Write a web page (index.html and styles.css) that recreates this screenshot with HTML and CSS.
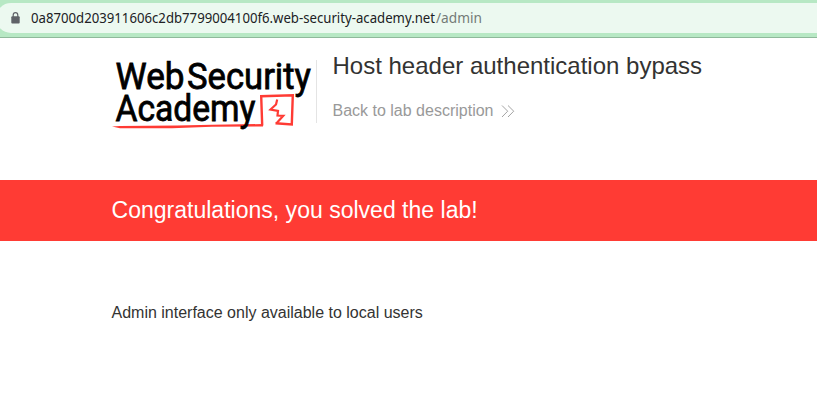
FILE: index.html
```
<!DOCTYPE html>
<html lang="en">
<head>
<meta charset="utf-8">
<title>Host header authentication bypass</title>
<link rel="stylesheet" href="styles.css">
</head>
<body>
<div class="toolbar">
  <div class="address">
    <svg class="lock" width="9" height="12" viewBox="0 0 9 12"><path d="M2.2 5V3a2.3 2.3 0 0 1 4.6 0v2" fill="none" stroke="#5f6368" stroke-width="1.2"/><rect x=".3" y="4.2" width="8.4" height="7.2" rx="1" fill="#5f6368"/></svg>
    <svg class="url" width="460" height="22" viewBox="0 0 460 22"><text x="0" y="15.5" textLength="404" lengthAdjust="spacingAndGlyphs">0a8700d203911606c2db7799004100f6.web-security-academy.net</text><text class="path" x="405" y="15.5" textLength="46" lengthAdjust="spacingAndGlyphs">/admin</text></svg>
  </div>
</div>
<header class="header">
  <svg class="logo" width="204" height="84" viewBox="0 0 204 84" role="img" aria-label="Web Security Academy">
    <g class="wordmark">
      <text x="3.5" y="38.5" textLength="69" lengthAdjust="spacingAndGlyphs">Web</text>
      <text x="75" y="38.5" textLength="124" lengthAdjust="spacingAndGlyphs">Security</text>
    </g>
    <path d="M0 76.5L8 76L65 75.5L100 74.8L151 74L151 76.5L100 76.8L60 78.3L8 78.2Z" fill="#ff3b34"/>
    <path d="M150.2 75.5L149.2 46.2L180.8 45.2L179.8 74.4L163.5 73.3" fill="none" stroke="#ff3b34" stroke-width="2.4"/>
    <path d="M165.2 49.5L164 54.5L158.5 59.5L166 61L165.5 65.5L171.3 65.8L164.5 73.3" fill="none" stroke="#ff3b34" stroke-width="2.2"/>
    <text class="wordmark" x="3.5" y="71" textLength="140" lengthAdjust="spacingAndGlyphs">Academy</text>
  </svg>
  <div class="title">
    <h1>Host header authentication bypass</h1>
    <a class="back">Back to lab description <svg width="14" height="14" viewBox="0 0 14 14"><path d="M1 1.5l5.7 5.7L1 13M7 1.5l5.7 5.7L7 13" fill="none" stroke="#999" stroke-width=".9"/></svg></a>
  </div>
</header>
<section class="banner">Congratulations, you solved the lab!</section>
<main class="content">Admin interface only available to local users</main>
</body>
</html>
```
FILE: styles.css
```
* { box-sizing: border-box; }
body { margin: 0; background: #fff; color: #333332; font: 16px/20px "Liberation Sans", Arial, sans-serif; overflow: hidden; }
.toolbar { height: 38px; padding-top: 3px; background: #b7e8c4; border-bottom: 1px solid #8fb99b; }
.address { display: flex; align-items: center; height: 30px; margin-left: -4px; padding-left: 15px; border-radius: 15px 0 0 15px; background: #ecf9f0; }
.lock { margin-right: 11px; }
.url { font-family: "Noto Sans", sans-serif; font-size: 14px; fill: #202124; }
.path { fill: #747b77; }
.header { display: flex; height: 142px; padding: 12px 0 0 112px; }
.logo { display: block; overflow: visible; }
.wordmark { font-family: Roboto, sans-serif; font-weight: 400; font-size: 37.5px; fill: #000; stroke: #000; stroke-width: .8px; }
.title { height: 63px; margin-top: 10px; padding-left: 15.5px; border-left: 1px solid #e4e4e4; }
h1 { margin: -10px 0 0; font-size: 24px; line-height: 32px; font-weight: 400; white-space: nowrap; }
.back { display: flex; align-items: center; gap: 7.5px; margin-top: 19px; color: #999; }
.banner { height: 61px; padding-left: 111.5px; line-height: 60px; font-size: 23.04px; color: #fff; background: #ff3b34; }
.content { padding: 62px 0 0 111.5px; }
```
